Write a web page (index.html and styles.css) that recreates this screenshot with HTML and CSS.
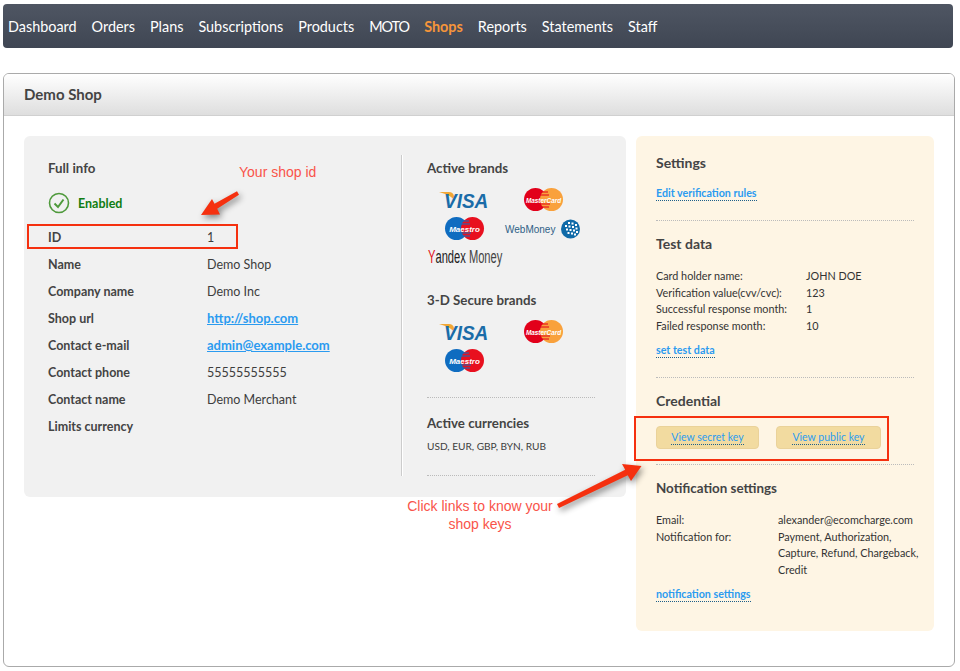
FILE: index.html
```html
<!DOCTYPE html>
<html lang="en">
<head>
    <meta charset="UTF-8">
    <meta name="viewport" content="width=device-width, initial-scale=1.0">
    <title>Demo Shop</title>
    <link rel="stylesheet" href="styles.css">
</head>
<body>
    <div class="page">
      <div class="nav">
        <a href="#">Dashboard</a>
        <a href="#">Orders</a>
        <a href="#">Plans</a>
        <a href="#">Subscriptions</a>
        <a href="#">Products</a>
        <a href="#" class="moto">MOTO</a>
        <a href="#" class="active">Shops</a>
        <a href="#">Reports</a>
        <a href="#">Statements</a>
        <a href="#">Staff</a>
      </div>

      <div class="panel">
        <div class="panel-title">Demo Shop</div>
        <div class="panel-body">

          <div class="info-box">
            <div class="info-col">
              <div class="box-title">Full info</div>
              <div class="status">
                <svg width="22" height="22" viewBox="0 0 22 22"><circle cx="11" cy="11" r="9.500" fill="none" stroke="#4f9a3c" stroke-width="1.600"/><path d="M6.500 11.500 L10 15 L15.500 7.500" fill="none" stroke="#4f9a3c" stroke-width="2"/></svg>
                <span>Enabled</span>
              </div>
              <div class="info-row"><strong>ID</strong><span>1</span></div>
              <div class="info-row"><strong>Name</strong><span>Demo Shop</span></div>
              <div class="info-row"><strong>Company name</strong><span>Demo Inc</span></div>
              <div class="info-row"><strong>Shop url</strong><a href="#" class="plain-link">http://shop.com</a></div>
              <div class="info-row"><strong>Contact e-mail</strong><a href="#" class="plain-link">admin@example.com</a></div>
              <div class="info-row"><strong>Contact phone</strong><span>55555555555</span></div>
              <div class="info-row"><strong>Contact name</strong><span>Demo Merchant</span></div>
              <div class="info-row"><strong>Limits currency</strong><span></span></div>
            </div>

            <div class="brands-col">
              <div class="box-title">Active brands</div>
              <div class="brand-grid">
                <svg class="visa" viewBox="0 0 50 18">
                  <path d="M0 1 H10 Q14 1 15 5 L16 10 Q12 4 0 1 Z" fill="#f2a735"/>
                  <text transform="translate(5 17) scale(1 1.100)" font-family="Liberation Sans" font-size="19" font-weight="bold" font-style="italic" fill="#1a6ca8">VISA</text>
                </svg>
                <svg class="circles" viewBox="0 0 39 23">
                  <circle cx="11.500" cy="11.500" r="11.500" fill="#e2001a"/>
                  <circle cx="27.500" cy="11.500" r="11.500" fill="#f9a13c"/>
                  <path d="M15 4 H24 M14 7 H25 M13 16 H26 M14 19 H25" stroke="#e2001a" stroke-width="1"/>
                  <text transform="translate(19.500 14.500) scale(.8 1)" text-anchor="middle" font-family="Liberation Sans" font-size="8" font-weight="bold" font-style="italic" fill="#fff">MasterCard</text>
                </svg>
                <svg class="circles" viewBox="0 0 39 23">
                  <circle cx="11.500" cy="11.500" r="11.500" fill="#0f6cc0"/>
                  <circle cx="27.500" cy="11.500" r="11.500" fill="#e8101f"/>
                  <path d="M15 4 H24 M14 7 H25 M13 16 H26 M14 19 H25" stroke="#0f6cc0" stroke-width="1"/>
                  <text x="19.500" y="14.500" text-anchor="middle" font-family="Liberation Sans" font-size="8" font-weight="bold" font-style="italic" fill="#fff">Maestro</text>
                </svg>
                <svg class="wm" viewBox="0 0 76 20">
                  <text x="0" y="14" font-family="Liberation Sans" font-size="10" fill="#2f5f86">WebMoney</text>
                  <circle cx="65.500" cy="10" r="9.500" fill="#0f6aa8"/>
                  <g fill="#fff">
                    <rect x="63" y="3" width="2" height="2"/><rect x="66.500" y="3.500" width="2" height="2"/><rect x="70" y="5" width="2" height="2"/>
                    <rect x="60" y="6" width="2" height="2"/><rect x="63.500" y="6.500" width="2" height="2"/><rect x="67" y="7" width="2" height="2"/><rect x="70.500" y="8.500" width="2" height="2"/>
                    <rect x="61" y="9.500" width="2" height="2"/><rect x="64.500" y="10" width="2" height="2"/><rect x="68" y="10.500" width="2" height="2"/><rect x="71" y="12" width="2" height="2"/>
                    <rect x="62.500" y="13" width="2" height="2"/><rect x="66" y="13.500" width="2" height="2"/><rect x="69" y="14.500" width="2" height="2"/>
                  </g>
                </svg>
                <svg class="yandex" viewBox="0 0 75 20">
                  <text transform="translate(1 15) scale(.587 1)" font-family="Liberation Sans" font-size="19" fill="#222"><tspan fill="#e0141c">Y</tspan>andex <tspan fill="#444">Money</tspan></text>
                </svg>
              </div>
              <div class="box-title secure-title">3-D Secure brands</div>
              <div class="brand-grid">
                <svg class="visa" viewBox="0 0 50 18">
                  <path d="M0 1 H10 Q14 1 15 5 L16 10 Q12 4 0 1 Z" fill="#f2a735"/>
                  <text transform="translate(5 17) scale(1 1.100)" font-family="Liberation Sans" font-size="19" font-weight="bold" font-style="italic" fill="#1a6ca8">VISA</text>
                </svg>
                <svg class="circles" viewBox="0 0 39 23">
                  <circle cx="11.500" cy="11.500" r="11.500" fill="#e2001a"/>
                  <circle cx="27.500" cy="11.500" r="11.500" fill="#f9a13c"/>
                  <path d="M15 4 H24 M14 7 H25 M13 16 H26 M14 19 H25" stroke="#e2001a" stroke-width="1"/>
                  <text transform="translate(19.500 14.500) scale(.8 1)" text-anchor="middle" font-family="Liberation Sans" font-size="8" font-weight="bold" font-style="italic" fill="#fff">MasterCard</text>
                </svg>
                <svg class="circles" viewBox="0 0 39 23">
                  <circle cx="11.500" cy="11.500" r="11.500" fill="#0f6cc0"/>
                  <circle cx="27.500" cy="11.500" r="11.500" fill="#e8101f"/>
                  <path d="M15 4 H24 M14 7 H25 M13 16 H26 M14 19 H25" stroke="#0f6cc0" stroke-width="1"/>
                  <text x="19.500" y="14.500" text-anchor="middle" font-family="Liberation Sans" font-size="8" font-weight="bold" font-style="italic" fill="#fff">Maestro</text>
                </svg>
              </div>
              <div class="dots secure-dots"></div>
              <div class="box-title currency-title">Active currencies</div>
              <div class="currencies">USD, EUR, GBP, BYN, RUB</div>
              <div class="dots currency-dots"></div>
            </div>
          </div>

          <div class="side-box">
            <div class="side-title">Settings</div>
            <div class="side-links"><a href="#" class="dot-link">Edit verification rules</a></div>
            <div class="dots side-dots"></div>

            <div class="side-title">Test data</div>
            <div class="side-table test-table">
              <span>Card holder name:</span><span>JOHN DOE</span>
              <span>Verification value(cvv/cvc):</span><span>123</span>
              <span>Successful response month:</span><span>1</span>
              <span>Failed response month:</span><span>10</span>
            </div>
            <div class="side-links"><a href="#" class="dot-link">set test data</a></div>
            <div class="dots side-dots"></div>

            <div class="side-title">Credential</div>
            <div class="key-buttons">
              <div class="key-btn secret"><a href="#">View secret key</a></div>
              <div class="key-btn public"><a href="#">View public key</a></div>
            </div>
            <div class="dots key-dots"></div>

            <div class="side-title notify-title">Notification settings</div>
            <div class="side-table notify-table">
              <span>Email:</span><span>alexander@ecomcharge.com</span>
              <span>Notification for:</span><span>Payment, Authorization,<br>Capture, Refund, Chargeback,<br>Credit</span>
            </div>
            <div class="side-links"><a href="#" class="dot-link">notification settings</a></div>
          </div>

        </div>
      </div>

      <!-- annotations on top of the screenshot -->
      <div class="note note-id">Your shop id</div>
      <div class="note note-keys">Click links to know your<br>shop keys</div>
      <div class="mark mark-id"></div>
      <div class="mark mark-keys"></div>
      <svg class="arrows" width="960" height="671">
        <polygon points="201,215 212,199 214.500,203.800 237,191.300 239,194.700 217.200,208.800 220,214.500" fill="#f5300f"/>
        <polygon points="641.500,466 631,481 627.800,475.200 559,508 557,504 625.200,469.800 622,464" fill="#f5300f"/>
      </svg>
    </div>
</body>
</html>
```

FILE: styles.css
```css
* { margin: 0; padding: 0; box-sizing: border-box; }
body { font-family: Lato, "Noto Sans", sans-serif; background-color: #fff; color: #3d3d3d; font-size: 12.500px; line-height: 17px; }
a { text-decoration: none; }
.page { position: relative; width: 960px; height: 671px; padding: 4px 5px 0 3px; overflow: hidden; }

.nav { display: flex; align-items: center; gap: 15px; height: 44px; margin-right: 2px; padding: 0 5px; background: linear-gradient(#4f5663, #3f4653); border-radius: 4px; }
.nav a { color: #fff; font-size: 14.400px; }
.nav a.moto { letter-spacing: -1px; }
.nav a.active { color: #f6953a; font-weight: bold; }

.panel { margin-top: 25px; height: 594px; border: 1px solid #aaa; border-radius: 6px; overflow: hidden; }
.panel-title { height: 42px; padding-left: 20px; font-size: 15px; font-weight: bold; line-height: 40px; color: #444; background: linear-gradient(#fff, #dedede); border-bottom: 1px solid #d0d0d0; }
.panel-body { display: flex; align-items: flex-start; gap: 10px; padding: 20px 0 0 20px; }

.info-box { display: flex; width: 602px; height: 361px; padding: 19px 0 0 24px; background-color: #f1f1f1; border-radius: 6px; }
.info-col { width: 354px; height: 321px; padding-top: 4px; border-right: 1px solid #ccc; box-shadow: 1px 0 0 #fff; }
.box-title { font-size: 13.300px; font-weight: bold; line-height: 18px; color: #444; }
.status { display: flex; align-items: center; gap: 8px; height: 24px; margin-top: 14px; }
.status span { color: #0f7d12; font-weight: bold; }
.info-row { display: flex; align-items: center; height: 27px; }
.status + .info-row { margin-top: 9px; }
.info-row strong { width: 159px; color: #444; }
.plain-link { color: #2b9bf0; font-size: 13px; font-weight: bold; text-decoration: underline; }

.brands-col { width: 168px; margin-left: 25px; padding-top: 4px; }
.brand-grid { display: grid; grid-template-columns: 74px 74px; grid-auto-rows: 29px; column-gap: 5px; margin-top: 8px; align-items: center; justify-items: center; }
.brand-grid svg { overflow: visible; }
.brand-grid .visa { width: 50px; height: 18px; }
.brand-grid .circles { width: 39px; height: 23px; }
.brand-grid .wm { width: 76px; height: 20px; }
.brand-grid .yandex { width: 75px; height: 20px; justify-self: start; grid-column: 1 / 3; }
.secure-title { margin-top: 19px; }
.dots { border-top: 1px dotted #bbb; }
.secure-dots { margin-top: 22px; }
.currency-title { margin-top: 16px; }
.currencies { margin-top: 6px; font-size: 10.100px; }
.currency-dots { margin-top: 20px; }

.side-box { width: 298px; height: 495px; padding: 18px 20px 0; background-color: #fef5e4; border-radius: 6px; color: #333; }
.side-title { font-size: 14px; font-weight: bold; line-height: 18px; color: #444; }
.notify-title { font-size: 13.400px; }
.side-links { font-size: 10.700px; line-height: 14px; font-weight: bold; }
.side-box > .side-title + .side-links { margin-top: 14px; }
.dot-link { display: inline-block; color: #2b9bf0; border-bottom: 1px dotted #1d5f8a; }
.side-dots { margin: 19px 0 14px; }
.side-table { display: grid; margin-top: 15px; font-size: 10.800px; line-height: 16.500px; }
.test-table { grid-template-columns: 150px 1fr; margin-bottom: 9px; }
.notify-table { grid-template-columns: 122px 1fr; margin-bottom: 9px; white-space: nowrap; }
.key-buttons { display: flex; gap: 17px; margin-top: 16px; }
.key-btn { display: flex; justify-content: center; align-items: center; height: 23px; padding-top: 1px; font-size: 10.500px; background-color: #f2dba0; border: 1px solid #ead29a; border-radius: 4px; }
.key-btn.secret { width: 103px; }
.key-btn.public { width: 105px; }
.key-btn a { color: #2b9bf0; line-height: 13px; border-bottom: 1px dotted #1d5f8a; }
.key-dots { margin: 15px 0 14px; }

.note { position: absolute; font-family: "Liberation Sans", Arial, sans-serif; font-size: 14px; line-height: 18px; color: #f9544a; text-align: center; }
.note-id { left: 239px; top: 163px; }
.note-keys { left: 404px; top: 497px; width: 152px; }
.mark { position: absolute; border: 2px solid #f5300f; }
.mark-id { left: 27px; top: 224px; width: 211px; height: 25px; }
.mark-keys { left: 634px; top: 416px; width: 255px; height: 45px; }
.arrows { position: absolute; left: 0; top: 0; pointer-events: none; filter: drop-shadow(2px 3px 3px rgba(0, 0, 0, .45)); }
```
